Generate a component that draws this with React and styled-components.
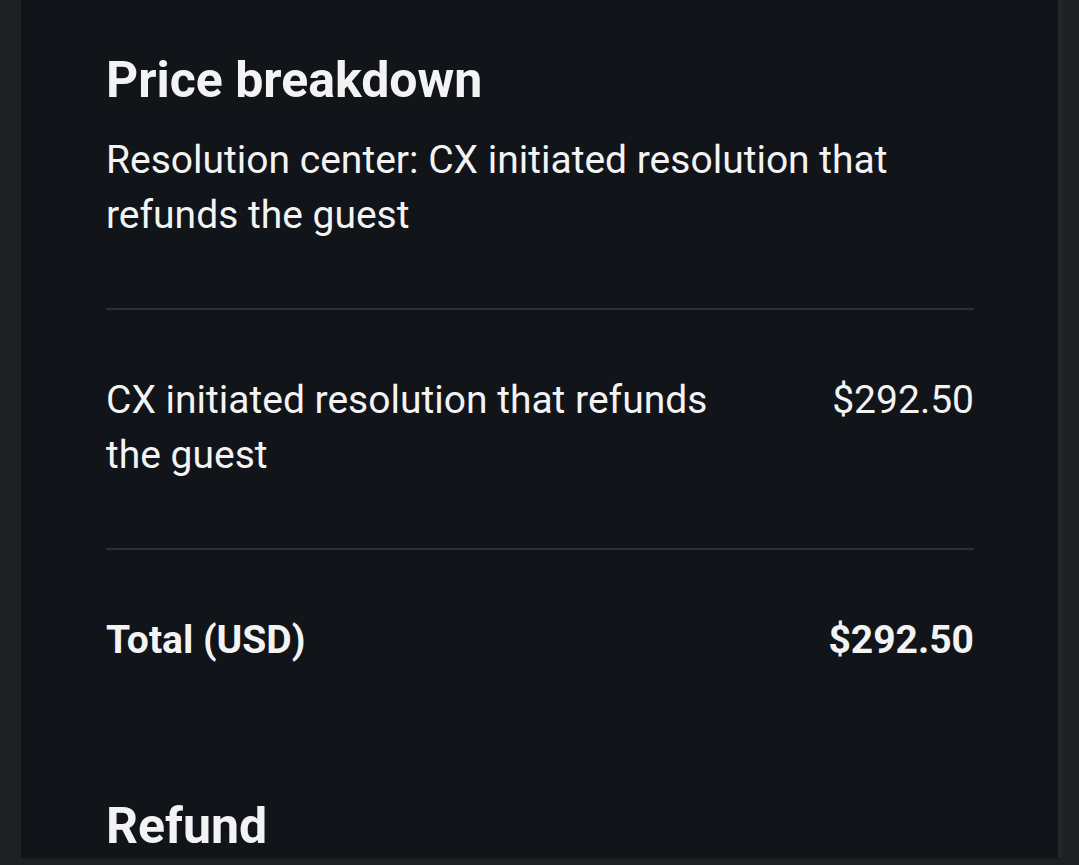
import React from 'react';
import styled, { createGlobalStyle } from 'styled-components';

const GlobalStyle = createGlobalStyle`
  html, body {
    margin: 0;
    padding: 0;
    background: #1e2024;
    font-family: Roboto, "Noto Sans", "Liberation Sans", sans-serif;
    -webkit-font-smoothing: antialiased;
  }
`;

const Page = styled.div`
  width: 1079px;
  height: 865px;
  overflow: hidden;
  padding: 0 17px 0 21px;
  box-sizing: border-box;
  background: #1e2024;
`;

const Panel = styled.div`
  height: 858px;
  overflow: hidden;
  background: #111419;
  border-right: 4px solid #24262a;
  box-shadow: 0 1px 0 #17191d;
  padding: 52px 84px 0 85px;
  box-sizing: border-box;
  color: #f3f3f4;
`;

const Heading = styled.h2`
  margin: 0;
  font-size: 50px;
  line-height: 56px;
  font-weight: 700;
  margin-top: ${p => p.$top || 0}px;
`;

const Description = styled.p`
  margin: 25px 0 0;
  font-size: 39px;
  line-height: 55px;
  font-weight: 400;
  padding-bottom: 65px;
  border-bottom: 2px solid #2c2f35;
`;

const Row = styled.div`
  display: flex;
  justify-content: space-between;
  align-items: flex-start;
  gap: 100px;
  padding: 63px 0 65px;
  border-bottom: ${p => (p.$divider ? '2px solid #2c2f35' : 'none')};
  font-size: 39px;
  line-height: 55px;
  font-weight: ${p => (p.$bold ? 700 : 400)};
`;

const Label = styled.span`
  flex: 1;
`;

const Amount = styled.span`
  white-space: nowrap;
`;

export default function App() {
  return (
    <>
      <GlobalStyle />
      <Page>
        <Panel>
          <Heading>Price breakdown</Heading>
          <Description>
            Resolution center: CX initiated resolution that refunds the guest
          </Description>
          <Row $divider>
            <Label>CX initiated resolution that refunds the guest</Label>
            <Amount>$292.50</Amount>
          </Row>
          <Row $bold>
            <Label>Total (USD)</Label>
            <Amount>$292.50</Amount>
          </Row>
          <Heading $top={65}>Refund</Heading>
        </Panel>
      </Page>
    </>
  );
}
